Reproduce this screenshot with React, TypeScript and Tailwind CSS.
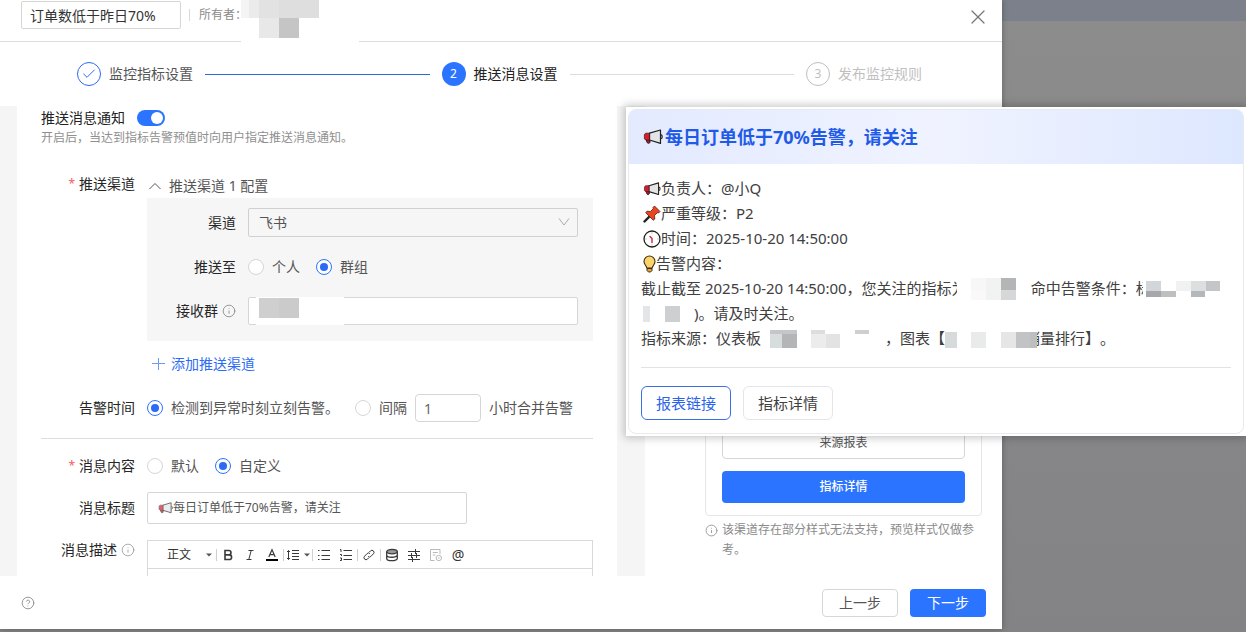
import React, { useState } from "react";
import { Check, CircleHelp, Info, X } from "lucide-react";

type Cell = { x: number; y: number; w: number; h: number; fill: string };

type MosaicProps = {
	width: number;
	height: number;
	cells: Cell[];
	className?: string;
};

// blurred-out private data
const Mosaic = ({ width, height, cells, className }: MosaicProps) => (
	<svg width={width} height={height} className={className} shapeRendering="crispEdges" aria-hidden="true">
		<rect width={width} height={height} fill="#fff" />
		{cells.map((c, i) => (
			<rect key={i} x={c.x} y={c.y} width={c.w} height={c.h} fill={c.fill} />
		))}
	</svg>
);

const ownerCells: Cell[] = [
	{ x: 0, y: 0, w: 8, h: 18, fill: "#f4f4f4" },
	{ x: 8, y: 0, w: 10, h: 18, fill: "#ebebeb" },
	{ x: 18, y: 0, w: 20, h: 18, fill: "#e2e2e2" },
	{ x: 38, y: 0, w: 40, h: 18, fill: "#dedede" },
	{ x: 18, y: 18, w: 20, h: 20, fill: "#e8e8e8" },
	{ x: 38, y: 18, w: 20, h: 20, fill: "#c5c5c5" },
];

const groupCells: Cell[] = [
	{ x: 3, y: 1, w: 20, h: 20, fill: "#cfcfcf" },
	{ x: 23, y: 1, w: 20, h: 20, fill: "#cbcbcb" },
];

const metricCells: Cell[] = [
	{ x: 14, y: 1, w: 15, h: 12, fill: "#f7f7f7" },
	{ x: 14, y: 13, w: 15, h: 10, fill: "#f9f9f9" },
	{ x: 29, y: 1, w: 15, h: 22, fill: "#f1f2f2" },
	{ x: 44, y: 1, w: 15, h: 12, fill: "#b3b5b7" },
	{ x: 44, y: 13, w: 15, h: 10, fill: "#d5d7d8" },
];

const conditionCells: Cell[] = [
	{ x: 3, y: 4, w: 15, h: 10, fill: "#d3d6d8" },
	{ x: 3, y: 14, w: 15, h: 6, fill: "#a5a7aa" },
	{ x: 18, y: 14, w: 15, h: 6, fill: "#bdbfc1" },
	{ x: 33, y: 4, w: 15, h: 10, fill: "#f0f1f1" },
	{ x: 48, y: 4, w: 15, h: 10, fill: "#dcdfe0" },
	{ x: 48, y: 14, w: 14, h: 6, fill: "#b5b8ba" },
	{ x: 63, y: 4, w: 14, h: 10, fill: "#c3c6c7" },
];

const unitCells: Cell[] = [
	{ x: 2, y: 2, w: 7, h: 16, fill: "#e3e5e6" },
	{ x: 24, y: 2, w: 15, h: 16, fill: "#cdd0d1" },
];

const boardCells: Cell[] = [
	{ x: 1, y: 1, w: 12, h: 18, fill: "#d7dcdd" },
	{ x: 13, y: 1, w: 15, h: 18, fill: "#b3b5b6" },
	{ x: 1, y: 1, w: 27, h: 4, fill: "#c3c7c9" },
	{ x: 42, y: 1, w: 14, h: 4, fill: "#dcddde" },
	{ x: 42, y: 5, w: 15, h: 14, fill: "#ececec" },
	{ x: 57, y: 5, w: 14, h: 14, fill: "#e3e3e4" },
	{ x: 86, y: 1, w: 14, h: 4, fill: "#cdcfd0" },
];

const chartCells: Cell[] = [
	{ x: 0, y: 3, w: 12, h: 16, fill: "#d6dada" },
	{ x: 26, y: 3, w: 15, h: 16, fill: "#e9eaea" },
	{ x: 56, y: 3, w: 15, h: 16, fill: "#e6e6e7" },
	{ x: 71, y: 3, w: 14, h: 16, fill: "#c2c3c4" },
	{ x: 85, y: 3, w: 7, h: 16, fill: "#bdbebf" },
];

const Megaphone = ({ className }: { className?: string }) => (
	<svg viewBox="0 0 20 16" className={className} aria-hidden="true">
		<path d="M3 10.5h4v2.600c0 1.600-3 1.600-3 0z" fill="#c8102e" stroke="#1f1f1f" strokeWidth="1" />
		<path d="M6.5 4.2 17.5 1v13.4L6.5 11z" fill="#e3e4e6" stroke="#1f1f1f" strokeWidth="1.2" strokeLinejoin="round" />
		<path d="M1.400 5.600 2.600 4.200h4V11h-4L1.400 9.800z" fill="#e0182d" stroke="#1f1f1f" strokeWidth=".7" strokeLinejoin="round" />
		<path d="M18.200 5.600c1.300.600 1.300 3.600 0 4.200" fill="none" stroke="#1f1f1f" strokeWidth="1.2" />
	</svg>
);

const Pin = () => (
	<svg viewBox="0 0 18 18" className="size-[18px]" aria-hidden="true">
		<path d="M6.500 11.500 1.500 16.500" stroke="#1f1f1f" strokeWidth="2.4" strokeLinecap="round" />
		<path
			d="M11.500 1 17 6.500 15.500 8 14.200 7.800 11.500 10.500 11.800 14 10.300 15.300 2.700 7.700 4 6.200 7.500 6.500 10.200 3.800 10 2.500z"
			fill="#e8461e"
			stroke="#5a1c10"
			strokeWidth=".8"
			strokeLinejoin="round"
		/>
	</svg>
);

const Clock = () => (
	<svg viewBox="0 0 18 18" className="size-[18px]" aria-hidden="true">
		<circle cx="9" cy="9" r="8" fill="#fff" stroke="#1f1f1f" strokeWidth="1.3" />
		<path d="M9 2.5v1M9 14.5v1M2.5 9h1M14.5 9h1" stroke="#777" strokeWidth=".8" />
		<path d="M9 12.5v-4L7 6.500" fill="none" stroke="#d3223a" strokeWidth="1.400" strokeLinecap="round" />
	</svg>
);

const Bulb = () => (
	<svg viewBox="0 0 13 18" className="h-[18px] w-[13px]" aria-hidden="true">
		<path
			d="M6.5 1A5.500 5.500 0 0 0 1 6.500c0 3 2.400 4 2.800 6.500h5.400c.4-2.500 2.800-3.500 2.800-6.500A5.500 5.500 0 0 0 6.500 1z"
			fill="#fcd36b"
			stroke="#3a2c14"
			strokeWidth="1.1"
		/>
		<path d="M4 13.5h5v2L7.500 17h-2L4 15.500z" fill="#e8a13a" stroke="#3a2c14" strokeWidth="1" />
	</svg>
);

const Caret = ({ className }: { className?: string }) => (
	<svg viewBox="0 0 6 4" className={`h-1 w-1.5 ${className ?? ""}`} aria-hidden="true">
		<path d="M0 .5h6l-3 3z" fill="#555" />
	</svg>
);

const glyphs: Record<string, React.ReactNode> = {
	bold: <path d="M4 2.5h3.800a2.200 2.200 0 0 1 0 4.400H4zM4 6.900h4.300a2.300 2.300 0 0 1 0 4.600H4z" strokeWidth="1.6" />,
	italic: <path d="M5.5 2.5h5M3.5 11.5h5M8.200 2.500l-2.400 9" />,
	color: (
		<>
			<path d="M3.800 9 7 1.700 10.200 9M4.900 6.700h4.200" strokeWidth="1.2" />
			<path d="M1 12h12" stroke="#000" strokeWidth="2" />
		</>
	),
	height: <path d="M2.5 2.5v9M1 4l1.5-1.5L4 4M1 10l1.5 1.5L4 10M6 2.5h7M6 5.5h7M6 8.5h7M6 11.5h7" />,
	ul: <path d="M1 2.5h1.500M1 7.500h1.500M1 11.500h1.500M4.500 2.500H13M4.500 7.500H13M4.500 11.500H13" />,
	ol: <path d="M1 1.500h1v2.500M1 6.500h1.500v1.500M1 10h1.500v2.500H1M4.500 2.500H13M4.500 7.500H13M4.500 11.500H13" />,
	link: (
		<path d="M6 8.400a2 2 0 0 0 2.900 0l2.500-2.600a2 2 0 0 0-2.900-2.900L7.300 4.100M8 5.600a2 2 0 0 0-2.900 0L2.600 8.200a2 2 0 0 0 2.900 2.900l1.200-1.200" />
	),
	data: (
		<>
			<ellipse cx="7" cy="3.6" rx="5.3" ry="2.2" fill="#999" strokeWidth="1.2" />
			<path d="M1.700 3.600v6.800c0 3 10.600 3 10.600 0V3.600M1.700 7c0 3 10.600 3 10.600 0" strokeWidth="1.3" />
		</>
	),
	filter: <path d="M1 3.500h12M1 7.500h12M1 11.500h12M8.500 1v5M4.500 5v5M9.500 5v5M5.500 9v5" />,
	doc: (
		<g stroke="#b9b9b9">
			<path d="M5.500 12.500h-4v-11h9.500V6M3.800 4.500h5M3.800 7h2.500" />
			<circle cx="9.8" cy="10" r="2.7" />
			<path d="M9 10h1.600" />
		</g>
	),
};

const ToolButton = ({ name, title }: { name: string; title: string }) => (
	<button type="button" aria-label={title} className="flex h-5 w-[22px] items-center justify-center">
		<svg viewBox="0 0 14 14" className="size-3.5" fill="none" stroke="#3a3a3a" aria-hidden="true">
			{glyphs[name]}
		</svg>
	</button>
);

const Divider = () => <span className="h-3 w-px shrink-0 bg-[#d0d0d0]" />;

type RadioProps = {
	name: string;
	label: string;
	checked: boolean;
	onChange: () => void;
};

const Radio = ({ name, label, checked, onChange }: RadioProps) => (
	<label className="flex items-center gap-2 text-[#555]">
		<input
			type="radio"
			name={name}
			checked={checked}
			onChange={onChange}
			className="flex size-4 shrink-0 appearance-none items-center justify-center rounded-full border border-[#d6d6d6] bg-white checked:border-[#2b74ff] checked:before:size-2 checked:before:rounded-full checked:before:bg-[#2b6bf5] checked:before:content-['']"
		/>
		{label}
	</label>
);

const Required = () => <span className="mr-1 pt-0.5 text-xs leading-4 text-[#f26060]">*</span>;

const labelClass = "flex h-5 w-[94px] shrink-0 justify-end text-[#262626]";

const Steps = () => (
	<ol className="flex h-16 shrink-0 items-center gap-3 pr-20 pl-[77px]">
		<li className="flex shrink-0 items-center gap-2 text-[#555]">
			<span className="flex size-6 items-center justify-center rounded-full border border-[#2b6bf5] text-[#2b6bf5]">
				<Check size={16} strokeWidth={1.5} />
			</span>
			监控指标设置
		</li>
		<li aria-hidden="true" className="h-px flex-1 bg-[#2b6bd8]" />
		<li className="flex shrink-0 items-center gap-2 text-[#222]">
			<span className="flex size-6 items-center justify-center rounded-full bg-[#2b74ff] text-xs text-white">2</span>
			推送消息设置
		</li>
		<li aria-hidden="true" className="h-px flex-1 bg-[#dcdcdc]" />
		<li className="flex shrink-0 items-center gap-2 text-[#bfbfbf]">
			<span className="flex size-6 items-center justify-center rounded-full border border-[#bfbfbf] text-xs">3</span>
			发布监控规则
		</li>
	</ol>
);

const ChannelBox = () => {
	const [target, setTarget] = useState("group");

	return (
		<div className="mt-0.5 flex flex-col gap-5 bg-[#f6f6f6] pt-2.5 pr-[15px] pb-4">
			<div className="flex items-center gap-3">
				<label htmlFor="channel" className="w-[89px] shrink-0 text-right text-[#262626]">
					渠道
				</label>
				<div className="relative flex-1">
					<select
						id="channel"
						className="block h-[29px] w-full appearance-none rounded-xs border border-[#d0d0d0] bg-transparent pl-2.5 text-[#555]">
						<option>飞书</option>
					</select>
					<svg
						viewBox="0 0 12 8"
						className="pointer-events-none absolute top-2.5 right-2 h-2 w-3"
						fill="none"
						stroke="#aaa"
						aria-hidden="true">
						<path d="M1 .5l5 6.500 5-6.500" />
					</svg>
				</div>
			</div>
			<div role="radiogroup" aria-label="推送至" className="flex h-5 items-center gap-3">
				<span className="w-[89px] shrink-0 text-right text-[#262626]">推送至</span>
				<div className="flex gap-4">
					<Radio name="target" label="个人" checked={target === "person"} onChange={() => setTarget("person")} />
					<Radio name="target" label="群组" checked={target === "group"} onChange={() => setTarget("group")} />
				</div>
			</div>
			<div className="flex items-center gap-3">
				<label htmlFor="group" className="flex w-[89px] shrink-0 items-center justify-end gap-1 text-[#262626]">
					接收群
					<Info size={14} strokeWidth={1.5} className="text-[#8a8a8a]" />
				</label>
				<div className="relative flex-1">
					<input
						id="group"
						type="text"
						className="block h-7 w-full rounded-xs border border-[#d6d6d6] bg-white px-2.5"
					/>
					<Mosaic width={88} height={28} cells={groupCells} className="absolute top-0 left-2" />
				</div>
			</div>
		</div>
	);
};

const Editor = () => (
	<div className="min-w-0 flex-1 border border-[#d9d9d9]">
		<div className="flex h-7 items-center border-b border-[#d9d9d9]">
			<div className="relative mr-0.5">
				<select
					aria-label="段落样式"
					className="block h-5 w-[66px] appearance-none pl-[19px] text-xs text-[#333]">
					<option>正文</option>
				</select>
				<Caret className="pointer-events-none absolute top-2 right-0.5" />
			</div>
			<Divider />
			<ToolButton name="bold" title="加粗" />
			<ToolButton name="italic" title="斜体" />
			<ToolButton name="color" title="文字颜色" />
			<Divider />
			<button type="button" aria-label="行高" className="flex h-5 w-7 items-center gap-1 pl-0.5">
				<svg viewBox="0 0 14 14" className="size-3.5" fill="none" stroke="#3a3a3a" aria-hidden="true">
					{glyphs.height}
				</svg>
				<Caret />
			</button>
			<Divider />
			<ToolButton name="ul" title="无序列表" />
			<ToolButton name="ol" title="有序列表" />
			<Divider />
			<ToolButton name="link" title="链接" />
			<Divider />
			<ToolButton name="data" title="数据" />
			<ToolButton name="filter" title="字段" />
			<ToolButton name="doc" title="报告" />
			<button type="button" className="h-5 w-[22px] text-center text-sm leading-5 text-[#333]">
				@
			</button>
		</div>
		<textarea aria-label="消息描述" className="block h-40 w-full resize-none" />
	</div>
);

const PushForm = () => {
	const [timing, setTiming] = useState("now");
	const [content, setContent] = useState("custom");

	return (
		<form className="min-w-0 flex-1 bg-white px-6 pt-0.5 leading-5">
			<label className="flex w-fit items-center gap-3 text-[#222]">
				推送消息通知
				<input
					type="checkbox"
					role="switch"
					defaultChecked
					className="flex h-4 w-7 appearance-none items-center rounded-full bg-[#bfbfbf] px-0.5 before:size-3 before:rounded-full before:bg-white before:content-[''] checked:justify-end checked:bg-[#2b74ff]"
				/>
			</label>
			<p className="text-xs leading-5 text-[#8f8f8f]">
				开启后，当达到指标告警预值时向用户指定推送消息通知。
			</p>

			<div className="mt-[26px] flex gap-3">
				<span className={labelClass}>
					<Required />
					推送渠道
				</span>
				<div className="min-w-0 flex-1 pt-0.5">
					<button type="button" className="flex items-center gap-2 pl-0.5 text-[#555]">
						<svg viewBox="0 0 12 8" className="h-2 w-3" fill="none" stroke="#555" aria-hidden="true">
							<path d="M.5 7 6 1.500 11.500 7" />
						</svg>
						推送渠道 1 配置
					</button>
					<ChannelBox />
					<button type="button" className="mt-[13px] ml-1 flex items-center gap-1.5 text-[#2b6bf5]">
						<svg viewBox="0 0 14 14" className="size-3.5" fill="none" stroke="#6d9bf0" aria-hidden="true">
							<path d="M7.500 1v12M1 6.500h13" />
						</svg>
						添加推送渠道
					</button>
				</div>
			</div>

			<div role="radiogroup" aria-label="告警时间" className="mt-5 flex items-center gap-3">
				<span className={labelClass}>告警时间</span>
				<div className="flex items-center gap-2">
					<Radio
						name="timing"
						label="检测到异常时刻立刻告警。"
						checked={timing === "now"}
						onChange={() => setTiming("now")}
					/>
					<span className="ml-2">
						<Radio name="timing" label="间隔" checked={timing === "merge"} onChange={() => setTiming("merge")} />
					</span>
					<input
						type="text"
						aria-label="间隔小时数"
						defaultValue="1"
						className="h-7 w-[66px] rounded-sm border border-[#d6d6d6] px-2 text-[#666]"
					/>
					<span className="text-[#555]">小时合并告警</span>
				</div>
			</div>
			<hr className="mt-4 border-[#dedede]" />

			<div role="radiogroup" aria-label="消息内容" className="mt-[17px] flex gap-3">
				<span className={labelClass}>
					<Required />
					消息内容
				</span>
				<div className="flex gap-4">
					<Radio name="content" label="默认" checked={content === "default"} onChange={() => setContent("default")} />
					<Radio name="content" label="自定义" checked={content === "custom"} onChange={() => setContent("custom")} />
				</div>
			</div>

			<div className="mt-4 flex items-center gap-3">
				<label htmlFor="title" className={labelClass}>
					消息标题
				</label>
				<div className="flex h-8 w-80 items-center rounded-xs border border-[#d6d6d6] pl-2.5">
					<Megaphone className="h-3 w-[15px] shrink-0 opacity-70" />
					<input
						id="title"
						type="text"
						defaultValue="每日订单低于70%告警，请关注"
						className="min-w-0 flex-1 text-xs text-[#555]"
					/>
				</div>
			</div>

			<div className="mt-4 flex gap-3">
				<span className={`${labelClass} items-center gap-1`}>
					消息描述
					<Info size={14} strokeWidth={1.2} className="text-[#888]" />
				</span>
				<Editor />
			</div>
		</form>
	);
};

const Preview = () => (
	<aside className="w-[357px] shrink-0 bg-white pt-6 pr-5 pl-[60px]">
		<div className="flex h-[386px] flex-col justify-end gap-3 rounded-sm border border-[#e6e6e6] px-4 pb-3">
			<button type="button" className="h-8 rounded-sm border border-[#d6d6d6] text-xs text-[#555]">
				来源报表
			</button>
			<button type="button" className="h-8 rounded-sm bg-[#2b74ff] text-xs font-medium text-white">
				指标详情
			</button>
		</div>
		<p className="mt-1 flex gap-1 text-xs leading-5 text-[#8a8a8a]">
			<Info size={13} strokeWidth={1.5} className="mt-1 shrink-0" />
			该渠道存在部分样式无法支持，预览样式仅做参考。
		</p>
	</aside>
);

const AlertCard = () => (
	<section className="absolute top-[107px] right-0 w-[620px] bg-white p-0.5 shadow-[0_0_8px_2px_rgba(0,0,0,0.22)]">
		<div className="overflow-hidden rounded-lg border border-[#e8e9ee]">
			<h2 className="flex h-[54px] items-center bg-linear-to-r from-[#e3eaff] via-[#f0f3ff] to-[#dde7ff] px-3 text-lg font-bold text-[#1f5be8]">
				<Megaphone className="mr-0.5 ml-0.5 h-4 w-5" />
				每日订单低于70%告警，请关注
			</h2>
			<div className="px-3 pt-3 pb-[13px] text-[15px] leading-[25px] text-[#404040] [text-spacing-trim:space-all]">
				<p className="flex items-center">
					<Megaphone className="ml-0.5 h-3.5 w-[18px]" />
					负责人：@小Q
				</p>
				<p className="flex items-center">
					<span className="ml-0.5">
						<Pin />
					</span>
					严重等级：P2
				</p>
				<p className="flex items-center">
					<span className="ml-0.5">
						<Clock />
					</span>
					时间：2025-10-20 14:50:00
				</p>
				<p className="flex items-center">
					<span className="ml-0.5">
						<Bulb />
					</span>
					告警内容：
				</p>
				<p className="flex h-[25px] items-center whitespace-pre">
					截止截至 2025-10-20 14:50:00，您关注的指标为
					<Mosaic width={66} height={24} cells={metricCells} className="relative mr-2 -ml-2.5 shrink-0" />
					命中告警条件：标
					<Mosaic width={86} height={24} cells={conditionCells} className="relative -ml-2 shrink-0" />
				</p>
				<p className="flex h-[25px] items-center">
					<Mosaic width={53} height={20} cells={unitCells} className="shrink-0" />
					)。请及时关注。
				</p>
				<p className="flex h-[25px] items-center whitespace-pre">
					指标来源：仪表板
					<Mosaic width={116} height={20} cells={boardCells} className="ml-2 shrink-0" />
					，图表【
					<Mosaic width={92} height={20} cells={chartCells} className="relative -mr-3 shrink-0" />
					销量排行】。
				</p>
				<hr className="mt-4 border-[#e2e2e2]" />
				<div className="mt-[18px] flex gap-3">
					<button type="button" className="h-[34px] rounded-md border border-[#3b6fe8] px-3.5 text-[#2b63e8]">
						报表链接
					</button>
					<button type="button" className="h-[34px] rounded-md border border-[#e4e5e8] px-3.5">
						指标详情
					</button>
				</div>
			</div>
		</div>
	</section>
);

const App = () => {
	return (
		<div className="relative h-screen overflow-hidden bg-linear-to-b from-[#8c8c8c] to-[#838386] pr-[244px] pb-[3px] font-['Noto_Sans','Noto_Sans_CJK_SC',sans-serif] text-sm">
			<div className="absolute top-0 right-0 h-[21px] w-[244px] bg-[#7c808a]" />
			<main className="relative flex h-full flex-col bg-white shadow-[0_0_6px_rgba(0,0,0,0.3)]">
				<header className="relative flex h-[42px] shrink-0 items-start border-b border-[#dedede] pt-px pr-3 pl-[21px]">
					<input
						type="text"
						aria-label="规则名称"
						defaultValue="订单数低于昨日70%"
						className="h-7 w-40 rounded-xs border border-[#d6d6d6] px-2 text-[#333]"
					/>
					<span className="mt-2 ml-2 h-3 w-px bg-[#d9d9d9]" />
					<span className="mt-1 ml-[9px] text-xs leading-5 text-[#8a8a8a]">所有者：</span>
					<Mosaic width={118} height={42} cells={ownerCells} className="absolute top-0 left-[241px]" />
					<button type="button" aria-label="关闭" className="mt-1 ml-auto text-[#777]">
						<X size={24} strokeWidth={1.2} />
					</button>
				</header>
				<Steps />
				<div className="flex min-h-0 flex-1 gap-7 overflow-hidden bg-[#f5f5f5] pl-[17px]">
					<PushForm />
					<Preview />
				</div>
				<footer className="flex h-[53px] shrink-0 items-center gap-3 bg-white pr-4 pl-[21px]">
					<button type="button" aria-label="帮助" className="mr-auto text-[#8a8a8a]">
						<CircleHelp size={14} strokeWidth={1.5} />
					</button>
					<button type="button" className="h-7 w-[76px] rounded-sm border border-[#d6d6d6] text-[#555]">
						上一步
					</button>
					<button type="button" className="h-7 w-[76px] rounded-sm bg-[#2b74ff] text-white">
						下一步
					</button>
				</footer>
			</main>
			<AlertCard />
		</div>
	);
};

export default App;
